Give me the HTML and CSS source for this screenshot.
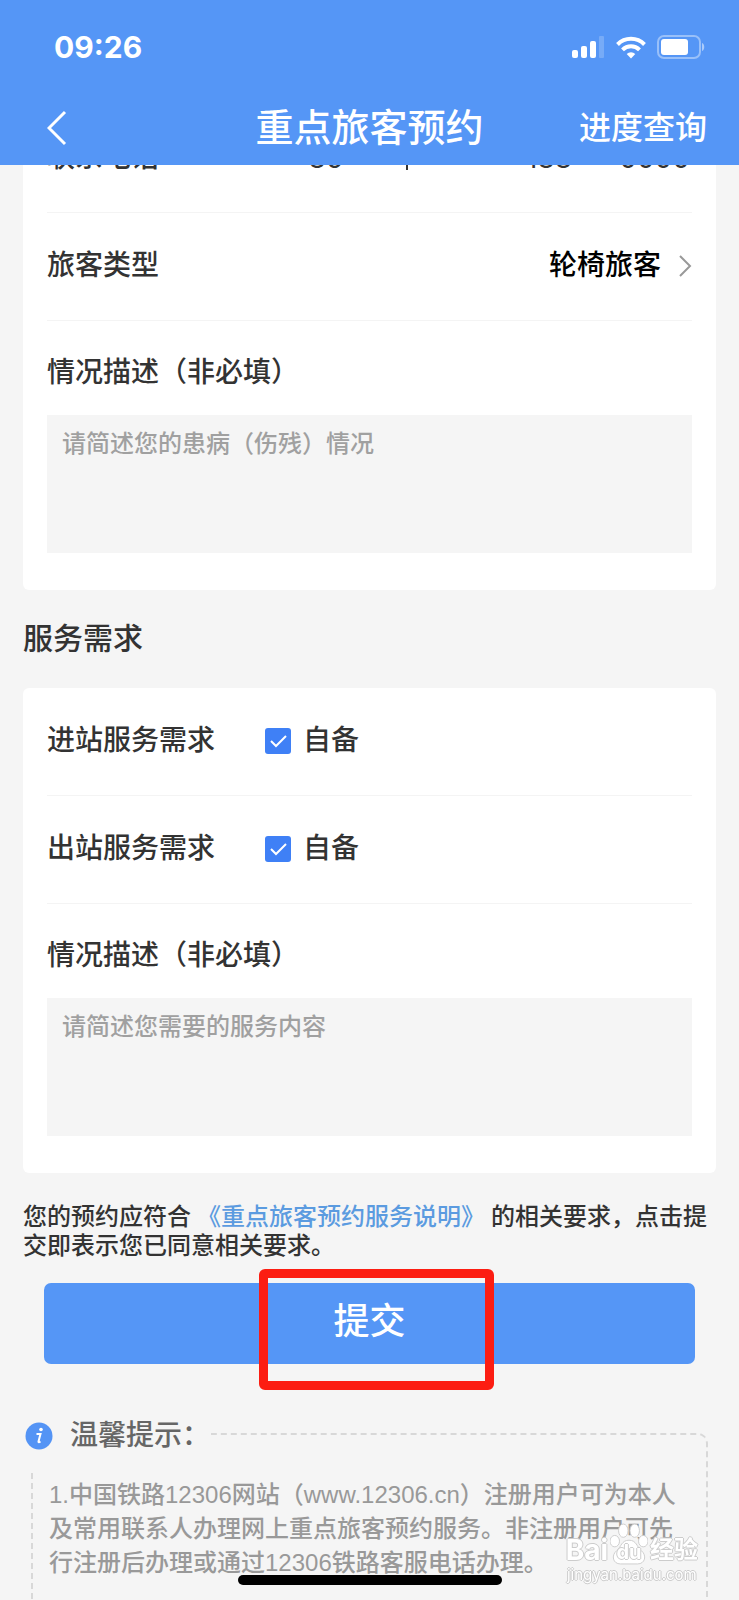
FILE: index.html
```html
<!DOCTYPE html>
<html lang="zh-CN">
<head>
    <meta charset="UTF-8">
    <meta name="viewport" content="width=device-width, initial-scale=1.0">
    <title>重点旅客预约</title>
    <link rel="stylesheet" href="styles.css">
</head>
<body>
    <header class="header">
        <div class="status-bar">
            <span class="time">09:26</span>
            <div class="status-icons">
                <svg width="33" height="24" viewBox="0 0 33 24" fill="#fff">
                    <rect x="0" y="15" width="6" height="8" rx="2"/>
                    <rect x="9" y="11" width="6" height="12" rx="2"/>
                    <rect x="18" y="6" width="6" height="17" rx="2"/>
                    <rect x="27" y="1" width="5" height="22" rx="1" opacity="0.2"/>
                </svg>
                <svg width="32" height="24" viewBox="0 0 32 24" fill="none" stroke="#fff" stroke-width="4">
                    <path d="M2.500 9.500a19 19 0 0 1 27 0"/>
                    <path d="M7.500 14.800a12 12 0 0 1 17 0"/>
                    <path d="M16 23.500l-4.300-4.500a6.200 6.200 0 0 1 8.600 0z" fill="#fff" stroke="none"/>
                </svg>
                <svg width="48" height="24" viewBox="0 0 48 24" fill="#fff">
                    <rect x="1" y="1" width="42" height="22" rx="6" fill="none" stroke="#fff" stroke-width="2" opacity="0.4"/>
                    <rect x="4" y="4" width="27" height="16" rx="3"/>
                    <path d="M45 8c3 1 3 7 0 8z" opacity="0.5"/>
                </svg>
            </div>
        </div>
        <nav class="nav-bar">
            <button class="back" type="button" aria-label="返回">
                <svg width="20" height="36" viewBox="0 0 20 36" fill="none" stroke="#fff" stroke-width="3">
                    <path d="M18 2L2 18l16 16"/>
                </svg>
            </button>
            <h1>重点旅客预约</h1>
            <a class="progress" href="#">进度查询</a>
        </nav>
    </header>

    <main class="content">
        <form>
            <section class="card card-scrolled">
                <div class="row">
                    <label class="label" for="phone">联系电话</label>
                    <div class="phone-field">
                        <span class="area-code">+86</span>
                        <span class="divider"></span>
                        <input class="phone" id="phone" type="text" value="188      0000">
                    </div>
                </div>
                <div class="row">
                    <label class="label" for="type">旅客类型</label>
                    <div class="picker">
                        <select id="type">
                            <option>轮椅旅客</option>
                        </select>
                        <svg width="14" height="24" viewBox="0 0 14 24" fill="none" stroke="#999" stroke-width="2">
                            <path d="M2 2l10 10L2 22"/>
                        </svg>
                    </div>
                </div>
                <div class="block">
                    <label class="label" for="condition">情况描述（非必填）</label>
                    <textarea id="condition" placeholder="请简述您的患病（伤残）情况"></textarea>
                </div>
            </section>

            <h2 class="section-title">服务需求</h2>

            <section class="card">
                <div class="row">
                    <span class="label label-fixed">进站服务需求</span>
                    <label class="check"><input type="checkbox" checked>自备</label>
                </div>
                <div class="row">
                    <span class="label label-fixed">出站服务需求</span>
                    <label class="check"><input type="checkbox" checked>自备</label>
                </div>
                <div class="block">
                    <label class="label" for="service">情况描述（非必填）</label>
                    <textarea id="service" placeholder="请简述您需要的服务内容"></textarea>
                </div>
            </section>

            <p class="agreement">您的预约应符合 <a href="#">《重点旅客预约服务说明》</a> 的相关要求，点击提交即表示您已同意相关要求。</p>

            <div class="submit-wrap">
                <button class="submit" type="submit">提交</button>
                <div class="marker"></div>
            </div>
        </form>

        <section class="tips">
            <h3 class="tips-title">
                <svg width="28" height="28" viewBox="0 0 28 28">
                    <circle cx="14" cy="14" r="13.500" fill="#5494f5"/>
                    <circle cx="16" cy="7.500" r="1.800" fill="#fff"/>
                    <path d="M11.500 12h4l-2 7.500c-.2 1 .6.900 2 0" fill="none" stroke="#fff" stroke-width="2"/>
                </svg>
                温馨提示：
            </h3>
            <div class="tips-box">
                <p>1.中国铁路12306网站（www.12306.cn）注册用户可为本人及常用联系人办理网上重点旅客预约服务。非注册用户可先行注册后办理或通过12306铁路客服电话办理。</p>
            </div>
        </section>
    </main>

    <div class="watermark">
        <div class="watermark-logo">
            <span>Bai</span>
            <span class="paw">
                <svg width="38" height="42" viewBox="0 0 40 44" fill="#fff" stroke="#ccc">
                    <ellipse cx="5" cy="19" rx="5" ry="6"/>
                    <ellipse cx="14" cy="8" rx="5" ry="7"/>
                    <ellipse cx="26" cy="8" rx="5" ry="7"/>
                    <ellipse cx="35" cy="19" rx="5" ry="6"/>
                    <path d="M20 18c-8 0-8 7-13 11-6 5-4 14 4 14h18c8 0 10-9 4-14-5-4-5-11-13-11z"/>
                </svg>
                <span class="du">du</span>
            </span>
            <span>经验</span>
        </div>
        <div class="watermark-url">jingyan.baidu.com</div>
    </div>
    <div class="home-indicator"></div>
</body>
</html>
```

FILE: styles.css
```css
* {
    box-sizing: border-box;
}

body {
    margin: 0;
    height: 100vh;
    overflow: hidden;
    background: #f5f5f5;
    color: #333;
    font-family: Roboto, "Noto Sans CJK SC", sans-serif;
    font-size: 28px;
    font-weight: 500;
    line-height: 40px;
}

h1,
h2,
h3,
p {
    margin: 0;
    font-weight: 500;
}

button,
input,
select,
textarea {
    border: none;
    outline: none;
    background: none;
    padding: 0;
    font: inherit;
    color: inherit;
}

/* header */
.header {
    position: relative;
    z-index: 1;
    height: 165px;
    background: #5596f6;
    color: #fff;
}

.status-bar {
    display: flex;
    justify-content: space-between;
    align-items: center;
    height: 93px;
    padding: 0 34px 0 54px;
}

.time {
    font-family: Inter, sans-serif;
    font-size: 30px;
    font-weight: 700;
}

.status-icons {
    display: flex;
    gap: 10px;
}

.nav-bar {
    display: grid;
    grid-template-columns: 1fr auto 1fr;
    align-items: center;
    height: 70px;
    padding: 0 32px;
}

.nav-bar h1 {
    font-size: 38px;
}

.back {
    display: flex;
    width: 40px;
    margin-left: 15px;
}

.progress {
    justify-self: end;
    font-size: 32px;
    color: #fff;
    text-decoration: none;
}

/* form cards */
.card {
    margin: 0 23px;
    padding: 0 24px 37px;
    background: #fff;
    border-radius: 6px;
}

/* first row is scrolled under the header */
.card-scrolled {
    margin-top: -60px;
}

.row {
    display: flex;
    align-items: center;
    justify-content: space-between;
    height: 108px;
    padding-bottom: 2px;
    border-bottom: 1px solid #f4f4f4;
}

.label-fixed {
    width: 218px;
}

.phone-field {
    display: flex;
    align-items: center;
    width: 402px;
    font-family: Inter, sans-serif;
    font-weight: 400;
}

.area-code {
    width: 116px;
}

.divider {
    width: 2px;
    height: 24px;
    margin-right: 118px;
    background: #333;
}

.phone {
    flex: 1;
    width: 0;
    white-space: pre;
}

.picker {
    display: flex;
    align-items: center;
    gap: 16px;
    color: #000;
}

.picker select {
    appearance: none;
}

.block {
    display: flex;
    flex-direction: column;
    padding-top: 32px;
}

.block .label {
    margin-bottom: 22px;
}

textarea {
    height: 138px;
    padding: 11px 15px;
    background: #f5f5f5;
    font-size: 24px;
    line-height: 36px;
    resize: none;
}

textarea::placeholder {
    color: #a0a0a0;
}

.section-title {
    padding: 0 23px;
    font-size: 30px;
    line-height: 98px;
}

.check {
    display: flex;
    align-items: center;
    flex: 1;
    gap: 12px;
}

.check input {
    appearance: none;
    width: 26px;
    height: 26px;
    margin: 0;
    border-radius: 3px;
    background: #3f80f6 url("data:image/svg+xml,%3Csvg xmlns='http://www.w3.org/2000/svg' viewBox='0 0 26 26'%3E%3Cpath d='M6 13l5 5L21 8' fill='none' stroke='white' stroke-width='2'/%3E%3C/svg%3E");
}

.agreement {
    padding: 30px 23px 0;
    font-size: 24px;
    line-height: 29px;
}

.agreement a {
    color: #5b9be0;
    text-decoration: none;
}

/* submit */
.submit-wrap {
    position: relative;
    margin: 22px 44px 0;
}

.submit {
    display: block;
    width: 100%;
    height: 81px;
    border-radius: 7px;
    background: #5596f6;
    color: #fff;
    font-size: 36px;
    line-height: 40px;
    padding-bottom: 4px;
}

.marker {
    position: absolute;
    top: -14px;
    left: 33%;
    width: 235px;
    height: 121px;
    border: 9px solid #fc1d12;
    border-radius: 6px;
}

/* tips */
.tips {
    padding: 0 31px 0 25px;
    margin-top: 51px;
}

.tips-title {
    display: flex;
    align-items: center;
    gap: 17px;
    position: relative;
    width: 186px;
    height: 54px;
    padding-bottom: 12px;
    background: #f5f5f5;
    color: #666;
    font-size: 28px;
    white-space: nowrap;
}

.tips-box {
    margin: -36px 0 0 6px;
    padding: 43px 16px 80px;
    border: 2px dashed #d8d8d8;
    border-radius: 10px;
    color: #999;
    font-family: "Liberation Sans", "Noto Sans CJK SC", sans-serif;
    font-size: 24px;
    line-height: 34px;
}

/* overlays */
.home-indicator {
    position: fixed;
    bottom: 15px;
    left: 50%;
    width: 264px;
    height: 10px;
    margin-left: -132px;
    border-radius: 5px;
    background: #000;
}

.watermark {
    position: fixed;
    right: 41px;
    bottom: 15px;
    color: #fff;
    font-family: Inter, "Noto Sans CJK SC", sans-serif;
    text-shadow: 1px 0 #ccc, -1px 0 #ccc, 0 1px #ccc, 0 -1px #ccc;
}

.watermark-logo {
    display: flex;
    align-items: flex-end;
    gap: 2px;
    font-size: 28px;
    font-weight: 700;
    line-height: 30px;
}

.watermark-logo > span:last-child {
    font-size: 24px;
}

.paw {
    position: relative;
    display: flex;
}

.du {
    position: absolute;
    inset: 18px 0 0;
    font-size: 20px;
    line-height: 22px;
    text-align: center;
}

.watermark-url {
    font-size: 15px;
    font-weight: 400;
    line-height: 20px;
    text-align: center;
}
```
